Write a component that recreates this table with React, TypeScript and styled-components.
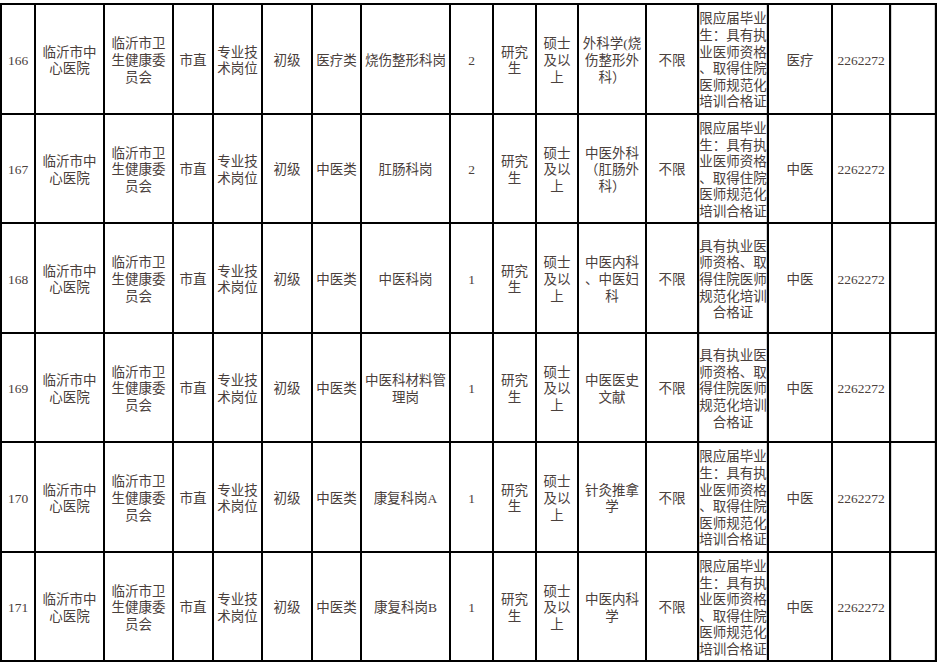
import { createGlobalStyle, styled } from "styled-components"

const GlobalStyle = createGlobalStyle`
  html, body {
    margin: 0;
    padding: 0;
    background: #ffffff;
  }
`

type Row = string[]

const rows: Row[] = [
  ["166", "临沂市中心医院", "临沂市卫生健康委员会", "市直", "专业技术岗位", "初级", "医疗类", "烧伤整形科岗", "2", "研究生", "硕士及以上", "外科学(烧伤整形外科）", "不限", "限应届毕业生：具有执业医师资格、取得住院医师规范化培训合格证", "医疗", "2262272", ""],
  ["167", "临沂市中心医院", "临沂市卫生健康委员会", "市直", "专业技术岗位", "初级", "中医类", "肛肠科岗", "2", "研究生", "硕士及以上", "中医外科（肛肠外科）", "不限", "限应届毕业生：具有执业医师资格、取得住院医师规范化培训合格证", "中医", "2262272", ""],
  ["168", "临沂市中心医院", "临沂市卫生健康委员会", "市直", "专业技术岗位", "初级", "中医类", "中医科岗", "1", "研究生", "硕士及以上", "中医内科、中医妇科", "不限", "具有执业医师资格、取得住院医师规范化培训合格证", "中医", "2262272", ""],
  ["169", "临沂市中心医院", "临沂市卫生健康委员会", "市直", "专业技术岗位", "初级", "中医类", "中医科材料管理岗", "1", "研究生", "硕士及以上", "中医医史文献", "不限", "具有执业医师资格、取得住院医师规范化培训合格证", "中医", "2262272", ""],
  ["170", "临沂市中心医院", "临沂市卫生健康委员会", "市直", "专业技术岗位", "初级", "中医类", "康复科岗A", "1", "研究生", "硕士及以上", "针灸推拿学", "不限", "限应届毕业生：具有执业医师资格、取得住院医师规范化培训合格证", "中医", "2262272", ""],
  ["171", "临沂市中心医院", "临沂市卫生健康委员会", "市直", "专业技术岗位", "初级", "中医类", "康复科岗B", "1", "研究生", "硕士及以上", "中医内科学", "不限", "限应届毕业生：具有执业医师资格、取得住院医师规范化培训合格证", "中医", "2262272", ""],
]

// column widths measured between the 2px rules
const widths = [32, 67, 67, 38, 47, 48, 47, 87, 41, 41, 40, 66, 50, 68, 62, 56, 44]

const NOTE_COL = 13
const LAST_COL = widths.length - 1

export default function App() {
  return (
    <>
      <GlobalStyle />
      <Sheet>
        {rows.map((row, r) =>
          row.map((text, c) => (
            <Cell key={`${r}-${c}`} $tight={c === NOTE_COL} $edge={c === NOTE_COL || c === LAST_COL}>
              {text}
            </Cell>
          ))
        )}
      </Sheet>
    </>
  )
}

const Sheet = styled.div`
  margin-top: 3px;
  width: max-content;
  display: grid;
  grid-template-columns: ${widths.map((w) => `${w}px`).join(" ")};
  grid-auto-rows: 107.5px;
  gap: 2px;
  padding: 2px;
  background: #000000;
`

const Cell = styled.div<{ $tight?: boolean; $edge?: boolean }>`
  display: flex;
  align-items: center;
  justify-content: center;
  padding: 5px ${(p) => (p.$tight ? "0" : "3px")} 0;
  background: #ffffff;
  color: #4a403c;
  font-family: "Liberation Serif", "Noto Sans CJK SC", serif;
  font-size: 13.5px;
  line-height: 16.6px;
  text-align: center;
  line-break: anywhere;
  word-break: break-all;
  overflow: hidden;
  box-shadow: ${(p) => (p.$edge ? "inset 1px 0 #d4d4d4, inset -1px 0 #d4d4d4" : "none")};
`
